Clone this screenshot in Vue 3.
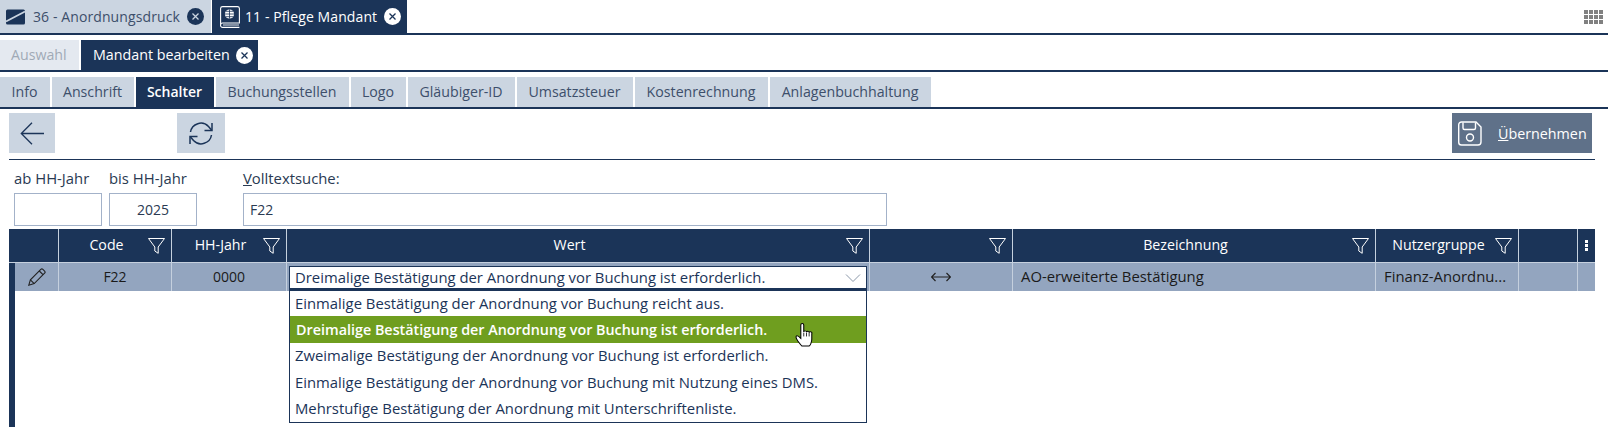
<script setup>
const mainTabs = [
  { label: 'Info', width: 50 },
  { label: 'Anschrift', width: 82 },
  { label: 'Schalter', width: 78 },
  { label: 'Buchungsstellen', width: 133 },
  { label: 'Logo', width: 55 },
  { label: 'Gläubiger-ID', width: 107 },
  { label: 'Umsatzsteuer', width: 116 },
  { label: 'Kostenrechnung', width: 133 },
  { label: 'Anlagenbuchhaltung', width: 161 },
]
const options = [
  'Einmalige Bestätigung der Anordnung vor Buchung reicht aus.',
  'Dreimalige Bestätigung der Anordnung vor Buchung ist erforderlich.',
  'Zweimalige Bestätigung der Anordnung vor Buchung ist erforderlich.',
  'Einmalige Bestätigung der Anordnung vor Buchung mit Nutzung eines DMS.',
  'Mehrstufige Bestätigung der Anordnung mit Unterschriftenliste.',
]
const headers = [
  { cls: 'c-edit', label: '', filter: false },
  { cls: 'c-code', label: 'Code', filter: true },
  { cls: 'c-year', label: 'HH-Jahr', filter: true },
  { cls: 'c-wert', label: 'Wert', filter: true },
  { cls: 'c-arrow', label: '', filter: true },
  { cls: 'c-bez', label: 'Bezeichnung', filter: true },
  { cls: 'c-nutz', label: 'Nutzergruppe', filter: true },
  { cls: 'c-blank', label: '', filter: false },
]
</script>

<template>
  <div class="page">
    <div class="bar bar-top">
      <div class="ttab">
        <svg class="ticon" width="19" height="16" viewBox="0 0 19 16"><rect x="0" y="0.5" width="19" height="15" rx="1.500" fill="#1b3458"/><path d="M0 12.500 19 2.500" stroke="#cbd5e1" stroke-width="1.600"/></svg>
        <span>36 - Anordnungsdruck</span>
        <svg class="close" width="17" height="17" viewBox="0 0 17 17"><circle cx="8.500" cy="8.500" r="8.500" fill="#1b3458"/><path d="M5.500 5.500l6 6M11.500 5.500l-6 6" stroke="#cbd5e1" stroke-width="1.300"/></svg>
      </div>
      <div class="ttab active">
        <svg class="ticon" width="20" height="22" viewBox="0 0 20 22" fill="none" stroke="#fff"><path d="M.6 19V2.500A2 2 0 0 1 2.600.6h14.800a2 2 0 0 1 2 1.900V17H2.600a2 2 0 0 0-2 2 2 2 0 0 0 2 2.400h16.800" stroke-width="1.100"/><path d="M3 19h16" stroke-width=".9"/><circle cx="9.500" cy="8" r="4.600" fill="#fff" stroke="none"/><path d="M4.900 8h9.200M9.500 3.400v9.200M6 5.300h7M6 10.700h7" stroke="#1b3458" stroke-width=".8"/></svg>
        <span>11 - Pflege Mandant</span>
        <svg class="close" width="17" height="17" viewBox="0 0 17 17"><circle cx="8.500" cy="8.500" r="8.500" fill="#fff"/><path d="M5.500 5.500l6 6M11.500 5.500l-6 6" stroke="#1b3458" stroke-width="1.300"/></svg>
      </div>
      <div class="spacer"></div>
      <div class="apps"><i v-for="n in 12" :key="n"></i></div>
    </div>

    <div class="bar bar-sub">
      <div class="stab disabled">Auswahl</div>
      <div class="stab active">
        <span>Mandant bearbeiten</span>
        <svg class="close" width="17" height="17" viewBox="0 0 17 17"><circle cx="8.500" cy="8.500" r="8.500" fill="#fff"/><path d="M5.500 5.500l6 6M11.500 5.500l-6 6" stroke="#1b3458" stroke-width="1.300"/></svg>
      </div>
    </div>

    <div class="bar bar-main">
      <div v-for="t in mainTabs" :key="t.label" class="mtab" :class="{ active: t.label === 'Schalter' }" :style="{ width: t.width + 'px' }">{{ t.label }}</div>
    </div>

    <div class="toolbar">
      <button class="tbtn back">
        <svg width="24" height="23" viewBox="0 0 24 23" fill="none" stroke="#1b3458" stroke-width="1.300"><path d="M24 11.500H1.500M12 .8 1.300 11.500 12 22.200"/></svg>
      </button>
      <button class="tbtn refresh">
        <svg width="26" height="25" viewBox="0 0 25 25" fill="none" stroke="#1b3458" stroke-width="1.500"><path d="M2 11A10.500 10.500 0 0 1 20 5.500l3 3.500"/><path d="M23.500 2v7.500H16"/><path d="M23 14A10.500 10.500 0 0 1 5 19.500L2 16"/><path d="M1.500 23v-7.500H9"/></svg>
      </button>
      <div class="spacer"></div>
      <button class="save">
        <svg width="24" height="25" viewBox="0 0 24 25" fill="none" stroke="#fff" stroke-width="1.400"><path d="M3.500 1h14.500l5 5v15a3 3 0 0 1-3 3H3.500a2.800 2.800 0 0 1-2.800-2.800V3.800A2.800 2.800 0 0 1 3.500 1z"/><path d="M5 1.500V7a1.500 1.500 0 0 0 1.500 1.500h9.500A1.500 1.500 0 0 0 17.500 7V1.500"/><circle cx="12" cy="16.500" r="3.500"/></svg>
        <span><u>Ü</u>bernehmen</span>
      </button>
    </div>

    <div class="form">
      <label class="fld f1"><span>ab HH-Jahr</span><div class="inp"></div></label>
      <label class="fld f2"><span>bis HH-Jahr</span><div class="inp center">2025</div></label>
      <label class="fld f3"><span><u>V</u>olltextsuche:</span><div class="inp">F22</div></label>
    </div>

    <div class="table">
      <div class="thead">
        <div v-for="h in headers" :key="h.cls" class="th" :class="h.cls">
          <span>{{ h.label }}</span>
          <svg v-if="h.filter" class="filter" width="17" height="16" viewBox="0 0 17 16" fill="none" stroke="#fff" stroke-width="1"><path d="M.5 .5h16L10.200 9v6.300L6.800 13V9z"/></svg>
        </div>
        <div class="th c-menu"><i></i><i></i><i></i></div>
      </div>
      <div class="tbody">
        <div class="row">
          <div class="td c-edit2">
            <svg width="18" height="18" viewBox="0 0 18 18" fill="none" stroke="#222" stroke-width="1.100"><path d="M.8 17.200l1.600-5.400L12.800 1.400a1.500 1.500 0 0 1 2.100 0l1.700 1.700a1.500 1.500 0 0 1 0 2.100L6.200 15.600z"/><path d="M2.400 11.800l3.800 3.800M11.300 3l3.700 3.700"/></svg>
          </div>
          <div class="td c-code center num">F22</div>
          <div class="td c-year center num">0000</div>
          <div class="td c-wert cellsel">
            <div class="select">
              <span>{{ options[1] }}</span>
              <svg width="16" height="8" viewBox="0 0 16 8" fill="none" stroke="#8a97a8" stroke-width="1"><path d="M1 .5l7 7 7-7"/></svg>
            </div>
            <div class="list">
              <div v-for="(o, i) in options" :key="o" class="opt" :class="{ sel: i === 1 }">{{ o }}</div>
              <svg class="hand" width="19" height="24" viewBox="0 0 18 25" preserveAspectRatio="none"><path d="M5.500 2a1.400 1.400 0 0 1 2.800 0v7.500a1.300 1.300 0 0 1 2.600 0a1.300 1.300 0 0 1 2.500 .5a1.300 1.300 0 0 1 2.500 1V17c0 3-1.500 6.500-2.500 7H6.500C5 22 3 20 1.500 16.500c-.6-1.500-.8-2.500 0-3s2 .3 4 2.500z" fill="#fff" stroke="#000" stroke-width="1"/><path d="M8.300 10v4M10.900 10v4M13.400 10v4" stroke="#000" stroke-width=".8"/></svg>
            </div>
          </div>
          <div class="td c-arrow center">
            <svg width="20" height="10" viewBox="0 0 20 10" fill="none" stroke="#222" stroke-width="1.200"><path d="M.5 5h19M4.500 1 .5 5l4 4M15.500 1l4 4-4 4"/></svg>
          </div>
          <div class="td c-bez">AO-erweiterte Bestätigung</div>
          <div class="td c-nutz">Finanz-Anordnu...</div>
          <div class="td c-blank"></div>
          <div class="td c-rest"></div>
        </div>
      </div>
    </div>
  </div>
</template>

<style>
html, body { margin: 0; background: #fff; overflow: hidden; }
</style>

<style scoped>
.page { width: 1608px; height: 427px; display: flex; flex-direction: column; overflow: hidden; font: 14.2px/1 "Open Sans", sans-serif; color: #1b3458; }
.spacer { flex: 1; }
.bar { display: flex; border-bottom: 2px solid #1b3458; box-sizing: content-box; white-space: nowrap; }
.bar-top { height: 33px; gap: 1px; align-items: stretch; }
.bar-sub { height: 30px; margin-top: 5px; gap: 2px; }
.bar-main { height: 30px; margin-top: 5px; gap: 2px; }
.ttab { width: 211px; box-sizing: border-box; display: flex; align-items: center; background: #cbd5e1; padding-left: 6px; font-size: 14px; color: #3d4f6b; letter-spacing: .1px; }
.ttab .ticon { margin-right: 8px; flex: none; }
.ttab .close { margin-left: 7px; }
.ttab.active { width: 195px; background: #1b3458; color: #fff; padding-left: 8px; }
.ttab.active .ticon { margin-right: 5px; }
.stab { display: flex; align-items: center; padding: 0 11px; box-sizing: border-box; }
.stab.disabled { width: 79px; background: #e4e9f0; color: #a0a9b6; }
.stab.active { width: 177px; background: #1b3458; color: #fff; font-size: 14.3px; padding: 0 12px; }
.stab .close { margin-left: 6px; flex: none; }
.mtab { display: flex; align-items: center; justify-content: center; background: #cbd5e1; color: #3d4f6b; padding-right: 1px; box-sizing: border-box; }
.mtab.active { background: #1b3458; color: #fff; font-weight: 600; font-size: 14px; }
.apps { display: grid; grid-template-columns: repeat(4, 4px); grid-auto-rows: 4px; gap: 1px; align-self: center; margin-right: 5px; }
.apps i { background: #808080; }
.toolbar { display: flex; align-items: flex-start; margin: 4px 13px 0 9px; padding-bottom: 6px; border-bottom: 1px solid #1b3458; height: 40px; box-sizing: content-box; }
.tbtn { height: 40px; border: 0; padding: 0; background: #cbd5e1; display: flex; align-items: center; justify-content: center; }
.tbtn.back { width: 46px; }
.tbtn.refresh { width: 48px; margin-left: 122px; padding-right: 1px; }
.save { width: 140px; height: 40px; margin-right: 3px; border: 0; background: #5f7189; color: #fff; font: 14.3px "Open Sans", sans-serif; display: flex; align-items: center; gap: 16px; padding: 0 0 0 6px; }
.form { display: flex; margin: 9px 0 0 14px; font-size: 14.85px; }
.fld { display: flex; flex-direction: column; }
.fld > span { height: 24px; line-height: 18px; color: #2a3a52; }
.inp { height: 33px; box-sizing: border-box; border: 1px solid #a3b2c9; padding: 0 6px; display: flex; align-items: center; color: #2a3a52; font-size: 14px; }
.inp.center { justify-content: center; }
.f1 { width: 88px; margin-right: 7px; }
.f2 { width: 88px; margin-right: 46px; }
.f3 { width: 644px; }
.table { margin: 3px 0 0 9px; flex: 1; display: flex; flex-direction: column; width: 1586px; }
.thead { display: flex; height: 34px; background: #1b3458; color: #fff; flex: none; }
.th { position: relative; display: flex; align-items: center; justify-content: center; box-sizing: border-box; border-right: 1px solid #c5d0de; border-bottom: 1px solid #c5d0de; padding: 0 17px 0 0; }
.filter { position: absolute; right: 6px; top: 9px; }
.c-edit { width: 50px; }
.c-code { width: 113px; }
.c-year { width: 115px; }
.c-wert { width: 583px; }
.c-arrow { width: 143px; }
.c-bez { width: 363px; }
.c-nutz { width: 143px; }
.c-blank { width: 59px; }
.th.c-menu { flex: 1; flex-direction: column; gap: 1px; border-right: 0; padding: 0; }
.c-menu i { width: 3px; height: 3px; background: #fff; }
.tbody { flex: 1; border-left: 6px solid #1b3458; }
.row { display: flex; height: 28px; background: #93a5bf; color: #1a1a1a; font-size: 14.85px; }
.td { position: relative; display: flex; align-items: center; box-sizing: border-box; border-right: 1px solid #c5d0de; padding: 0 8px 1px; }
.td.center { justify-content: center; }
.td.num { font-size: 14px; }
.c-edit2 { width: 44px; justify-content: center; padding: 0; }
.td.c-rest { flex: 1; border: 0; }
.td.cellsel { padding: 0; }
.select { position: absolute; left: 2px; right: 2px; top: 3px; height: 24px; box-sizing: border-box; background: #fff; border: 1px solid #1b3458; border-bottom-width: 2px; display: flex; align-items: center; justify-content: space-between; padding: 0 5px; color: #1b3458; }
.list { position: absolute; left: 2px; right: 2px; top: 27px; background: #fff; border: 1px solid #1b3458; z-index: 2; }
.opt { height: 26px; box-sizing: border-box; display: flex; align-items: center; padding: 0 5px 1px; color: #1b3458; }
.opt:first-child { height: 25px; }
.opt.sel { background: #6f9e1f; color: #fff; font-weight: 600; font-size: 14.35px; height: 27px; padding: 1px 5px 0 6px; }
.opt:nth-child(4) { height: 27px; }
.hand { position: absolute; left: 505px; top: 32px; }
</style>
